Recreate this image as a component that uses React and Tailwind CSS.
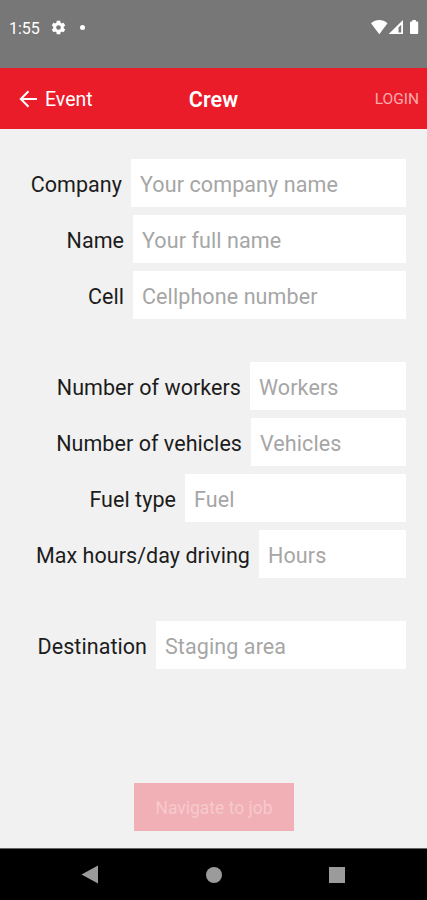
const groups = [
  [
    { label: 'Company', hint: 'Your company name', width: 'w-[275px]' },
    { label: 'Name', hint: 'Your full name', width: 'w-[273px]' },
    { label: 'Cell', hint: 'Cellphone number', width: 'w-[273px]' },
  ],
  [
    { label: 'Number of workers', hint: 'Workers', width: 'w-[156px]' },
    { label: 'Number of vehicles', hint: 'Vehicles', width: 'w-[155px]' },
    { label: 'Fuel type', hint: 'Fuel', width: 'w-[221px]' },
    { label: 'Max hours/day driving', hint: 'Hours', width: 'w-[147px]' },
  ],
  [{ label: 'Destination', hint: 'Staging area', width: 'w-[250px]' }],
];

function Field({ label, hint, width }) {
  return (
    <label className="flex h-12 items-center justify-end text-[21.5px]">
      <span className="mr-[9px] whitespace-nowrap pt-[5px] tracking-[0.05px] text-[#1c1c1c]">{label}</span>
      <input
        className={`${width} h-12 shrink-0 bg-white px-[9px] pt-0.5 tracking-[0.1px] text-[#252525] outline-none placeholder:text-[#a6a6a6] placeholder:opacity-100`}
        placeholder={hint}
      />
    </label>
  );
}

function StatusBar() {
  return (
    <div className="flex h-[68px] items-start bg-[#777] pl-[9px] pr-[7px] pt-[18px] text-white">
      <span className="w-[41px] pt-px text-[16px] leading-5">1:55</span>
      <svg className="mt-px" width="17" height="17" viewBox="0 0 24 24" fill="currentColor">
        <path fillRule="evenodd" d="M19.4 13a7.500 7.500 0 0 0 0-2l2.100-1.650-2.300-4-2.600 1.050a8 8 0 0 0-1.700-1L14.500 2.500h-5l-.4 2.900a8 8 0 0 0-1.700 1L4.800 5.350l-2.300 4L4.600 11a7.500 7.500 0 0 0 0 2l-2.100 1.650 2.300 4 2.600-1.050a8 8 0 0 0 1.700 1l.4 2.900h5l.4-2.900a8 8 0 0 0 1.700-1l2.600 1.050 2.300-4zM12 8.700a3.300 3.300 0 1 1 0 6.600 3.300 3.300 0 0 1 0-6.600z" />
      </svg>
      <span className="ml-[12.500px] mt-[6.500px] size-[5px] rounded-full bg-white" />
      <svg className="ml-auto mt-px" width="50" height="17" viewBox="0 0 50 17" fill="currentColor">
        <path d="M1 4.200C6-.1 12.500-.1 17.500 4.200L9.300 15.200z" />
        <path fillRule="evenodd" d="M33 1v14H18.700zM31.200 5.800l-2.700 2.700v4.900h2.700z" />
        <path d="M42.300 1h3.600v1.500h1.300q1 0 1 1V14q0 1-1 1h-6.200q-1 0-1-1V3.500q0-1 1-1h1.300z" />
      </svg>
    </div>
  );
}

export default function App() {
  return (
    <div className="flex h-[900px] w-[427px] flex-col overflow-hidden bg-[#f1f1f1] font-[Roboto,sans-serif]">
      <StatusBar />
      <header className="grid h-[61px] grid-cols-[1fr_60px_1fr] items-center bg-[#eb1c2a] pl-[19px] pr-2 pt-0.5 text-white">
        <button className="flex items-center gap-[7px] text-[19.5px]">
          <svg className="-mt-0.5" width="19" height="18" viewBox="0 0 19 18" fill="none" stroke="currentColor" strokeWidth="2">
            <path d="M18 9H2M9.500 1.300 1.800 9l7.700 7.700" />
          </svg>
          <span className="pt-px">Event</span>
        </button>
        <h1 className="-ml-[11px] pt-px text-center text-[21.5px] font-semibold tracking-[0.1px]">Crew</h1>
        <button className="pt-px text-right text-[15.500px] text-[#f9a9ad]">LOGIN</button>
      </header>
      <main className="flex flex-1 flex-col pr-[21px] pt-[30px]">
        <div className="flex flex-col gap-[43px]">
          {groups.map((fields, i) => (
            <div key={i} className="flex flex-col gap-2">
              {fields.map((f) => <Field key={f.label} {...f} />)}
            </div>
          ))}
        </div>
        <button className="ml-[134px] mt-[114px] h-12 w-40 bg-[#f1b0b6] pt-0.5 text-[17.500px] text-[#f7c9cd]">
          Navigate to job
        </button>
      </main>
      <nav className="flex h-[52px] items-center border-t border-[#666] bg-black pl-[81px] text-[#9b9b9b]">
        <svg width="18" height="20" viewBox="0 0 18 20" fill="currentColor"><path d="M.5 9.500 17 .5v18z" /></svg>
        <span className="ml-[107px] size-4 rounded-full bg-current" />
        <span className="ml-[107px] size-4 bg-current" />
      </nav>
    </div>
  );
}
